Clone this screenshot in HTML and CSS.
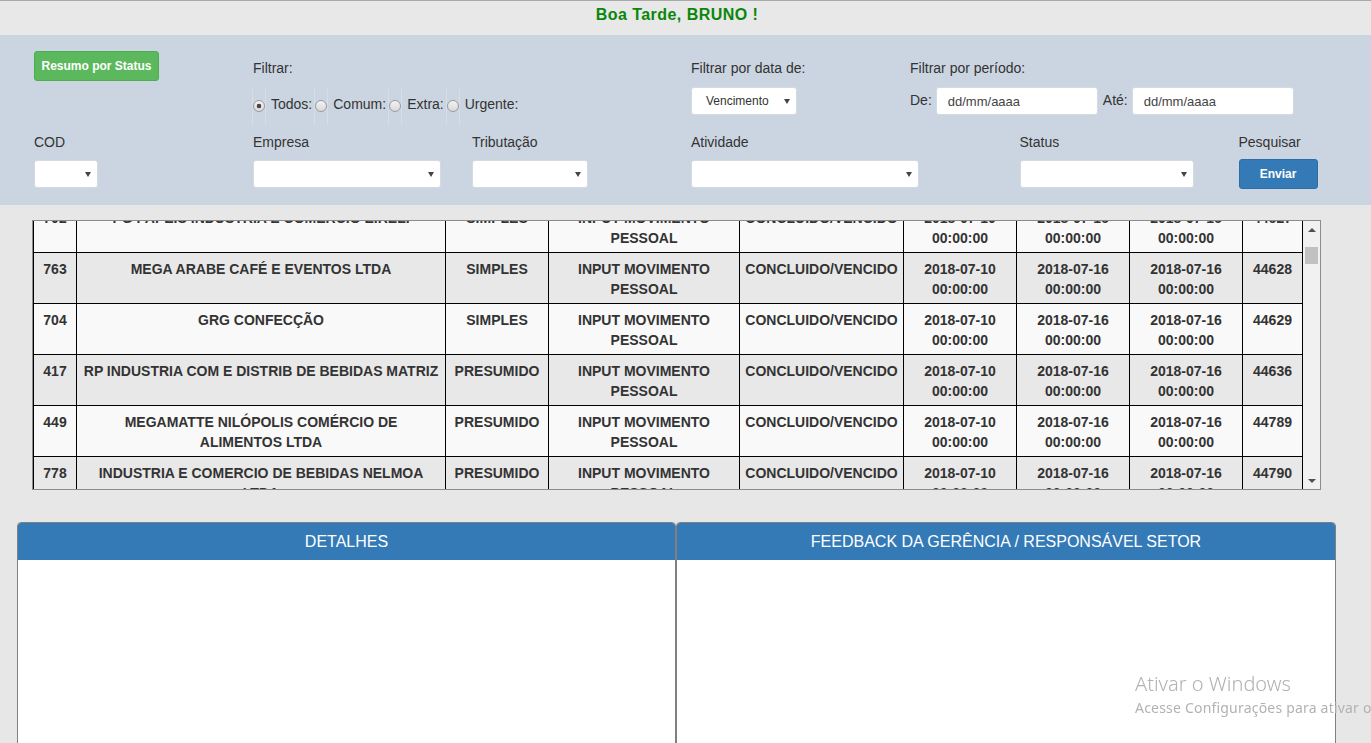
FILE: index.html
```html
<!DOCTYPE html>
<html lang="pt-BR">
<head>
<meta charset="utf-8">
<title>Painel de Atividades</title>
<link rel="stylesheet" href="styles.css">
</head>
<body>
<header class="greeting">Boa Tarde, BRUNO !</header>

<section class="filters">
  <div class="cell c-btn"><button class="btn btn-green" type="button">Resumo por Status</button></div>

  <div class="cell c-tipo">
    <div class="lbl lbl-top">Filtrar:</div>
    <div class="radios">
      <span class="rbox"><input type="radio" name="tipo" checked></span><label class="rlabel">Todos:</label>
      <span class="rbox"><input type="radio" name="tipo"></span><label class="rlabel">Comum:</label>
      <span class="rbox"><input type="radio" name="tipo"></span><label class="rlabel">Extra:</label>
      <span class="rbox"><input type="radio" name="tipo"></span><label class="rlabel">Urgente:</label>
    </div>
  </div>

  <div class="cell c-data">
    <div class="lbl lbl-top">Filtrar por data de:</div>
    <div class="select w-venc mt9"><span>Vencimento</span><i class="caret"></i></div>
  </div>

  <div class="cell c-periodo">
    <div class="lbl lbl-top">Filtrar por período:</div>
    <div class="range">
      <span class="rl">De:</span><input class="date" type="text" placeholder="dd/mm/aaaa">
      <span class="rl rl-ate">Até:</span><input class="date" type="text" placeholder="dd/mm/aaaa">
    </div>
  </div>

  <div class="cell c-cod">
    <div class="lbl">COD</div>
    <div class="select w-cod mt8"><span></span><i class="caret"></i></div>
  </div>
  <div class="cell c-emp">
    <div class="lbl">Empresa</div>
    <div class="select w-emp mt8"><span></span><i class="caret"></i></div>
  </div>
  <div class="cell c-trib">
    <div class="lbl">Tributação</div>
    <div class="select w-trib mt8"><span></span><i class="caret"></i></div>
  </div>
  <div class="cell c-ativ">
    <div class="lbl">Atividade</div>
    <div class="select w-ativ mt8"><span></span><i class="caret"></i></div>
  </div>
  <div class="cell c-status">
    <div class="lbl">Status</div>
    <div class="select w-status mt8"><span></span><i class="caret"></i></div>
  </div>
  <div class="cell c-pesq">
    <div class="lbl">Pesquisar</div>
    <button class="btn btn-blue" type="button">Enviar</button>
  </div>
</section>

<section class="tbl-wrap">
  <div class="tbl-view">
    <table class="grid">
      <colgroup>
        <col class="k-cod"><col class="k-emp"><col class="k-trib"><col class="k-ativ"><col class="k-status"><col class="k-dt"><col class="k-dt"><col class="k-dt"><col class="k-id">
      </colgroup>
      <tbody>
        <tr>
          <td>702</td><td>PG PAPEIS INDUSTRIA E COMERCIO EIRELI</td><td>SIMPLES</td><td>INPUT MOVIMENTO PESSOAL</td><td class="nw">CONCLUIDO/VENCIDO</td><td>2018-07-10 00:00:00</td><td>2018-07-16 00:00:00</td><td>2018-07-16 00:00:00</td><td>44627</td>
        </tr>
        <tr>
          <td>763</td><td>MEGA ARABE CAFÉ E EVENTOS LTDA</td><td>SIMPLES</td><td>INPUT MOVIMENTO PESSOAL</td><td class="nw">CONCLUIDO/VENCIDO</td><td>2018-07-10 00:00:00</td><td>2018-07-16 00:00:00</td><td>2018-07-16 00:00:00</td><td>44628</td>
        </tr>
        <tr>
          <td>704</td><td>GRG CONFECÇÃO</td><td>SIMPLES</td><td>INPUT MOVIMENTO PESSOAL</td><td class="nw">CONCLUIDO/VENCIDO</td><td>2018-07-10 00:00:00</td><td>2018-07-16 00:00:00</td><td>2018-07-16 00:00:00</td><td>44629</td>
        </tr>
        <tr>
          <td>417</td><td class="nw">RP INDUSTRIA COM E DISTRIB DE BEBIDAS MATRIZ</td><td>PRESUMIDO</td><td>INPUT MOVIMENTO PESSOAL</td><td class="nw">CONCLUIDO/VENCIDO</td><td>2018-07-10 00:00:00</td><td>2018-07-16 00:00:00</td><td>2018-07-16 00:00:00</td><td>44636</td>
        </tr>
        <tr>
          <td>449</td><td>MEGAMATTE NILÓPOLIS COMÉRCIO DE<br>ALIMENTOS LTDA</td><td>PRESUMIDO</td><td>INPUT MOVIMENTO PESSOAL</td><td class="nw">CONCLUIDO/VENCIDO</td><td>2018-07-10 00:00:00</td><td>2018-07-16 00:00:00</td><td>2018-07-16 00:00:00</td><td>44789</td>
        </tr>
        <tr>
          <td>778</td><td>INDUSTRIA E COMERCIO DE BEBIDAS NELMOA LTDA</td><td>PRESUMIDO</td><td>INPUT MOVIMENTO PESSOAL</td><td class="nw">CONCLUIDO/VENCIDO</td><td>2018-07-10 00:00:00</td><td>2018-07-16 00:00:00</td><td>2018-07-16 00:00:00</td><td>44790</td>
        </tr>
      </tbody>
    </table>
  </div>
  <div class="sb">
    <div class="sb-btn"><i class="arr-up"></i></div>
    <div class="sb-track"><div class="sb-thumb"></div></div>
    <div class="sb-btn"><i class="arr-down"></i></div>
  </div>
</section>

<section class="panels">
  <div class="panel">
    <div class="panel-head">DETALHES</div>
    <div class="panel-body"></div>
  </div>
  <div class="panel">
    <div class="panel-head">FEEDBACK DA GERÊNCIA / RESPONSÁVEL SETOR</div>
    <div class="panel-body"></div>
  </div>
</section>

<div class="watermark">
  <div class="wm-1">Ativar o Windows</div>
  <div class="wm-2">Acesse Configurações para ativar o Windows.</div>
</div>

<script src="script.js"></script>
</body>
</html>
```

FILE: styles.css
```css
* { box-sizing: border-box; }

html, body {
  margin: 0;
  height: 100%;
  overflow: hidden;
}

body {
  background: #e7e7e7;
  font-family: "Liberation Sans", Arial, sans-serif;
  font-size: 14px;
  color: #333;
}

/* greeting bar */
.greeting {
  height: 35px;
  border-top: 1px solid #a9a9a9;
  background: #e8e8e8;
  padding: 5px 17px 0 0;
  line-height: 18px;
  text-align: center;
  font-size: 16px;
  letter-spacing: 0.45px;
  font-weight: bold;
  color: #0a870a;
}

/* filters panel */
.filters {
  background: #cbd5e1;
  display: grid;
  grid-template-columns: repeat(12, 109.5px);
  row-gap: 8px;
  align-items: start;
  padding: 16px 0 16px 34px;
}

.cell { display: flex; flex-direction: column; align-items: flex-start; }
.c-btn { grid-column: 1 / 3; }
.c-tipo { grid-column: 3 / 7; }
.c-data { grid-column: 7 / 9; }
.c-periodo { grid-column: 9 / 13; }
.c-cod { grid-column: 1 / 3; }
.c-emp { grid-column: 3 / 5; }
.c-trib { grid-column: 5 / 7; }
.c-ativ { grid-column: 7 / 10; }
.c-status { grid-column: 10 / 12; }
.c-pesq { grid-column: 12 / 13; }

.lbl {
  line-height: 20px;
  font-size: 14px;
  color: #333;
  white-space: nowrap;
}
.lbl-top { margin-top: 7px; }

.btn {
  font-family: "Liberation Sans", Arial, sans-serif;
  font-weight: bold;
  font-size: 12px;
  color: #fff;
  border: 1px solid;
  border-radius: 3px;
  padding: 0;
  height: 30px;
}
.btn-green {
  width: 125px;
  background: #5cb85c;
  border-color: #4cae4c;
}
.btn-blue {
  width: 79px;
  margin-top: 7px;
  background: #337ab7;
  border-color: #2e6da4;
}

/* radios */
.radios {
  margin-top: 11px;
  margin-left: -1px;
  height: 35px;
  display: flex;
  align-items: center;
}
.rbox {
  height: 35px;
  width: 14px;
  display: flex;
  align-items: center;
  border-left: 1px solid rgba(255, 255, 255, 0.22);
  border-right: 1px solid rgba(255, 255, 255, 0.22);
}
.rbox input {
  -webkit-appearance: none;
  appearance: none;
  margin: 0;
  margin-top: -1px;
  width: 12px;
  height: 12px;
  border-radius: 50%;
  border: 1px solid #9b9b9b;
  background: linear-gradient(#f3f3f3, #d9d9d9);
}
.rbox input:checked {
  background: radial-gradient(circle, #474747 0, #474747 2px, transparent 2.6px), linear-gradient(#f3f3f3, #d9d9d9);
}
.rlabel {
  margin: 0 2px 6px 5px;
  line-height: 20px;
  font-size: 14px;
  color: #333;
}

/* selects */
.select {
  display: flex;
  align-items: center;
  justify-content: space-between;
  height: 28px;
  background: #fff;
  border: 1px solid #d4dae1;
  border-radius: 3px;
  padding: 0 6px 0 14px;
  font-size: 12px;
  color: #333;
}
.mt8 { margin-top: 8px; }
.mt9 { margin-top: 9px; }
.caret {
  width: 0;
  height: 0;
  border-left: 3px solid transparent;
  border-right: 3px solid transparent;
  border-top: 5px solid #444;
}
.w-venc { width: 106px; }
.w-cod { width: 64px; }
.w-emp { width: 188px; }
.w-trib { width: 116px; }
.w-ativ { width: 228px; }
.w-status { width: 174px; }

/* period range */
.range {
  margin-top: 9px;
  display: flex;
  align-items: center;
}
.rl {
  font-size: 14px;
  line-height: 20px;
  color: #333;
  margin: 0 4px 3px 0;
}
.rl-ate { margin-left: 5px; }
.date {
  width: 162px;
  height: 28px;
  border: 1px solid #d4dae1;
  border-radius: 3px;
  background: #fff;
  padding: 0 11px;
  font-family: "Liberation Sans", Arial, sans-serif;
  font-size: 13px;
  color: #333;
}
.date::placeholder { color: #444; }

/* table */
.tbl-wrap {
  margin: 15px 0 0 32px;
  width: 1289px;
  height: 270px;
  border: 1px solid #8c8c8c;
  display: flex;
  background: #fff;
}
.tbl-view {
  width: 1270px;
  height: 100%;
  overflow: hidden;
}
.grid {
  width: 1270px;
  table-layout: fixed;
  border-collapse: collapse;
}
.k-cod { width: 43px; }
.k-emp { width: 369px; }
.k-trib { width: 103px; }
.k-ativ { width: 191px; }
.k-status { width: 164px; }
.k-dt { width: 113px; }
.k-id { width: 60px; }

.grid td {
  border: 1px solid #000;
  padding: 6px 4px 4px;
  vertical-align: top;
  text-align: center;
  font-weight: bold;
  font-size: 14px;
  line-height: 20px;
  color: #333;
}
.grid td.nw { white-space: nowrap; }
.grid tr:nth-child(odd) td { background: #f9f9f9; }
.grid tr:nth-child(even) td { background: #e8e8e8; }

/* fake scrollbar */
.sb {
  width: 17px;
  display: flex;
  flex-direction: column;
  background: #f1f1f1;
}
.sb-btn {
  height: 17px;
  display: flex;
  align-items: center;
  justify-content: center;
}
.sb-track {
  flex: 1;
  padding: 9px 2px 0;
}
.sb-thumb {
  height: 17px;
  background: #c1c1c1;
}
.arr-up, .arr-down {
  width: 0;
  height: 0;
  border-left: 4px solid transparent;
  border-right: 4px solid transparent;
}
.arr-up { border-bottom: 4px solid #505050; }
.arr-down { border-top: 4px solid #505050; }

/* bottom panels */
.panels {
  margin: 32px 0 0 17px;
  display: grid;
  grid-template-columns: 659px 660px;
}
.panel {
  border: 1px solid #808080;
  border-radius: 4px 4px 0 0;
  overflow: hidden;
  height: 240px;
  background: #fff;
}
.panel-head {
  height: 37px;
  line-height: 37px;
  background: #337ab7;
  color: #fff;
  text-align: center;
  font-size: 16px;
}
.panel-body { background: #fff; }

/* OS activation watermark (overlay) */
.watermark {
  position: fixed;
  left: 1135px;
  top: 670px;
  white-space: nowrap;
  font-family: "Noto Sans", "Open Sans", sans-serif;
  color: #b2b2b2;
}
.wm-1 {
  font-size: 20px;
  line-height: 28px;
  font-weight: 300;
}
.wm-2 {
  font-size: 14px;
  letter-spacing: 0.2px;
  line-height: 20px;
}
```

FILE: script.js
```js
document.querySelector('.tbl-view').scrollTop = 20;
```
